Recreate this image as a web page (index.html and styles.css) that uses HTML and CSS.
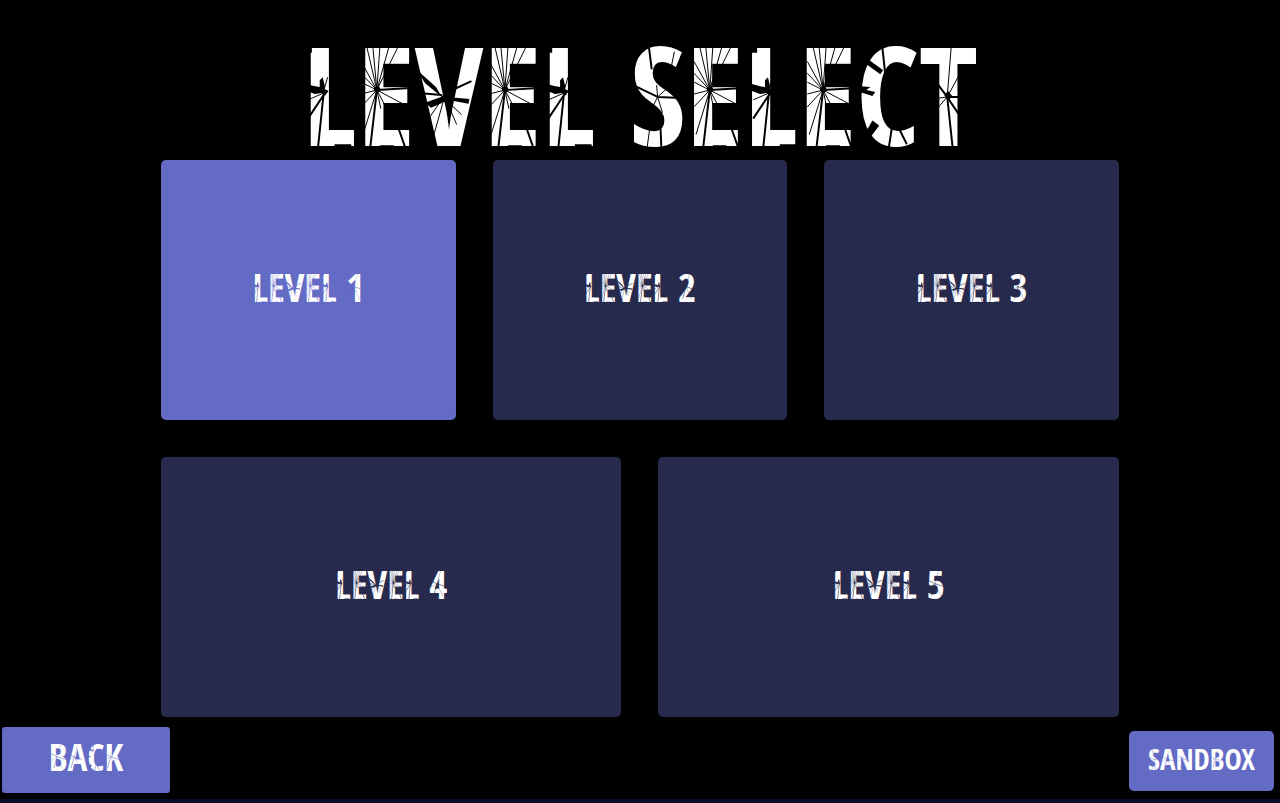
FILE: index.html
```html
<!DOCTYPE html>
<html lang="en">
<head>
    <meta charset="UTF-8">
    <meta name="viewport" content="width=device-width, initial-scale=1.0">
    <title>Level Select</title>
    <link rel="stylesheet" href="styles.css">
</head>
<body>
    <!-- Crack patterns shared by the title and the buttons -->
    <svg class="defs" aria-hidden="true">
        <defs>
            <g id="crack-l">
                <path class="hole" d="M-2 18h8v7h-8zM-2 56l10 3 6 1 0-7 3-3 2 8 0 4 4 2-4 5-3-3-7 1-11-4zM46 118h-17v5h17z"/>
                <path class="wide" d="M18 66L12 124M18 68L2 92"/>
                <path d="M18 66L2 73M18 64L22 50M24 100l22 3"/>
            </g>
            <g id="crack-e">
                <path d="M14 63L-2 34M14 63L4 20M14 63L10 20M14 63L17 20M14 63L26 20M14 63L35 20M14 63L-2 46M14 63L-2 55M14 63L-2 67M14 63L-2 80M14 63L0 108M14 63L18 82M14 63L24 82M14 63L46 80"/>
                <path class="wide" d="M14 63L7 124M14 63L48 61M36 102L43 122"/>
                <path class="hole" d="M11 61l5-2 2 4-3 3-4-2zM17 119h14v4h-14z"/>
            </g>
            <g id="crack-v">
                <path class="hole" d="M4 42L24 60 30 70 13 56zM13 76l16-6 4-4 3 4 22 2-1 5-20-4-18 8z"/>
                <path class="wide" d="M30 68L6 66M34 66L60 54"/>
                <path d="M33 72L50 88M34 72L45 98M29 74L18 90M31 76L22 108"/>
            </g>
            <g id="crack-level">
                <use href="#crack-l" x="4"/>
                <use href="#crack-e" x="62"/>
                <use href="#crack-v" x="112"/>
                <use href="#crack-e" x="192"/>
                <use href="#crack-l" x="248"/>
            </g>
            <g id="crack-s">
                <path class="wide" d="M-2 56L27 70M27 70L52 71M18 18L21 42M30 102L31 126"/>
                <path d="M27 70L38 60M27 70L20 84M27 70L32 86M27 70L26 58M19 102L16 124M44 24l-3 15-5-2-3 9"/>
            </g>
            <g id="crack-c">
                <path class="hole" d="M-2 59l13 1-4 3 9 2-3 4-16-5zM13 94l7 5-12 16-4-5zM6 36l3-4 15 11-3 4z"/>
                <path class="wide" d="M23 18L26 46M38 98L48 118M42 90L60 101M33 100L29 126"/>
            </g>
            <g id="crack-t">
                <path class="wide" d="M28 70L34 126M28 70L16 54M28 70L44 94M28 70H44"/>
                <path d="M28 70L32 20M28 70L40 48M28 70L16 84M28 70L14 72"/>
                <path class="hole" d="M25 68l4-4 4 5-4 5z"/>
            </g>
            <g id="crack-mark">
                <path class="wide" d="M24 66L0 54M24 66L54 76M24 66L12 108"/>
                <path d="M24 66L0 80M24 66L44 110M24 66L36 22"/>
            </g>
        </defs>
    </svg>

    <h1 class="title">
        <span class="cracked">LEVEL SELECT
            <svg class="cracks" viewBox="0 0 684 134" aria-hidden="true">
                <use href="#crack-level"/>
                <use href="#crack-s" x="334"/>
                <use href="#crack-e" x="400"/>
                <use href="#crack-l" x="456"/>
                <use href="#crack-e" x="515"/>
                <use href="#crack-c" x="566"/>
                <use href="#crack-t" x="627"/>
            </svg>
        </span>
    </h1>

    <main class="levels">
        <button type="button" class="level open">
            <span class="cracked">LEVEL 1
                <svg class="cracks" viewBox="0 0 400 134" aria-hidden="true"><use href="#crack-level"/><use href="#crack-mark" x="336"/></svg>
            </span>
        </button>
        <button type="button" class="level">
            <span class="cracked">LEVEL 2
                <svg class="cracks" viewBox="0 0 400 134" aria-hidden="true"><use href="#crack-level"/><use href="#crack-mark" x="336"/></svg>
            </span>
        </button>
        <button type="button" class="level">
            <span class="cracked">LEVEL 3
                <svg class="cracks" viewBox="0 0 400 134" aria-hidden="true"><use href="#crack-level"/><use href="#crack-mark" x="336"/></svg>
            </span>
        </button>
        <button type="button" class="level wide-level">
            <span class="cracked">LEVEL 4
                <svg class="cracks" viewBox="0 0 400 134" aria-hidden="true"><use href="#crack-level"/><use href="#crack-mark" x="336"/></svg>
            </span>
        </button>
        <button type="button" class="level wide-level">
            <span class="cracked">LEVEL 5
                <svg class="cracks" viewBox="0 0 400 134" aria-hidden="true"><use href="#crack-level"/><use href="#crack-mark" x="336"/></svg>
            </span>
        </button>
    </main>

    <nav class="bottom">
        <button type="button" class="back">
            <span class="cracked">BACK
                <svg class="cracks" viewBox="0 0 270 134" aria-hidden="true"><use href="#crack-mark" x="6"/><use href="#crack-mark" x="70"/><use href="#crack-c" x="140"/><use href="#crack-mark" x="206"/></svg>
            </span>
        </button>
        <button type="button" class="sandbox">
            <span class="cracked">SANDBOX
                <svg class="cracks" viewBox="0 0 500 134" aria-hidden="true"><use href="#crack-s" x="4"/><use href="#crack-mark" x="66"/><use href="#crack-mark" x="144"/><use href="#crack-mark" x="298"/></svg>
            </span>
        </button>
    </nav>
    <div class="edge"></div>
</body>
</html>
```
FILE: styles.css
```css
* {
    margin: 0;
    padding: 0;
    box-sizing: border-box;
}

body {
    --surface: #000;
    min-height: 100vh;
    display: flex;
    flex-direction: column;
    background: var(--surface);
    color: #fff;
    font-family: "Open Sans Condensed", "Liberation Sans", sans-serif;
    font-weight: bold;
    overflow-x: hidden;
}

.defs {
    position: absolute;
    width: 0;
    height: 0;
}

.title {
    padding-top: 28px;
    font-size: 136px;
    line-height: 132px;
    text-align: center;
}

.cracked {
    position: relative;
    display: inline-block;
    white-space: nowrap;
}

/* Cracks lie over the letters in the colour of what is behind them */
.cracks {
    position: absolute;
    top: 0;
    left: 0;
    height: 100%;
    overflow: visible;
    fill: none;
    stroke: var(--surface);
    stroke-width: 1;
}

.wide {
    stroke-width: 2;
}

.hole {
    fill: var(--surface);
    stroke: none;
}

button {
    --surface: #636bc4;
    border: none;
    border-radius: 5px;
    background: var(--surface);
    color: #fff;
    font: inherit;
    cursor: pointer;
}

button .wide {
    stroke-width: 4;
}

.levels {
    width: 75%;
    margin: 0 auto;
    padding: 0 1px;
    flex: 1;
    display: grid;
    grid-template-columns: repeat(6, 1fr);
    grid-auto-rows: minmax(120px, 1fr);
    gap: 37px;
}

.level {
    --surface: #282a4d;
    grid-column: span 2;
    padding-bottom: 6px;
    font-size: 39px;
    line-height: 38px;
}

.wide-level {
    grid-column: span 3;
}

.open {
    --surface: #636bc4;
}

.bottom {
    display: flex;
    justify-content: space-between;
    align-items: flex-end;
    padding: 10px 6px 6px 2px;
}

.back {
    width: 168px;
    height: 66px;
    border-radius: 3px;
    padding-bottom: 6px;
    font-size: 37px;
    line-height: 36px;
}

.sandbox {
    width: 145px;
    height: 60px;
    margin-bottom: 2px;
    padding-bottom: 4px;
    font-size: 29px;
    line-height: 28px;
}

.edge {
    height: 4px;
    background: #080a2c;
}
```
